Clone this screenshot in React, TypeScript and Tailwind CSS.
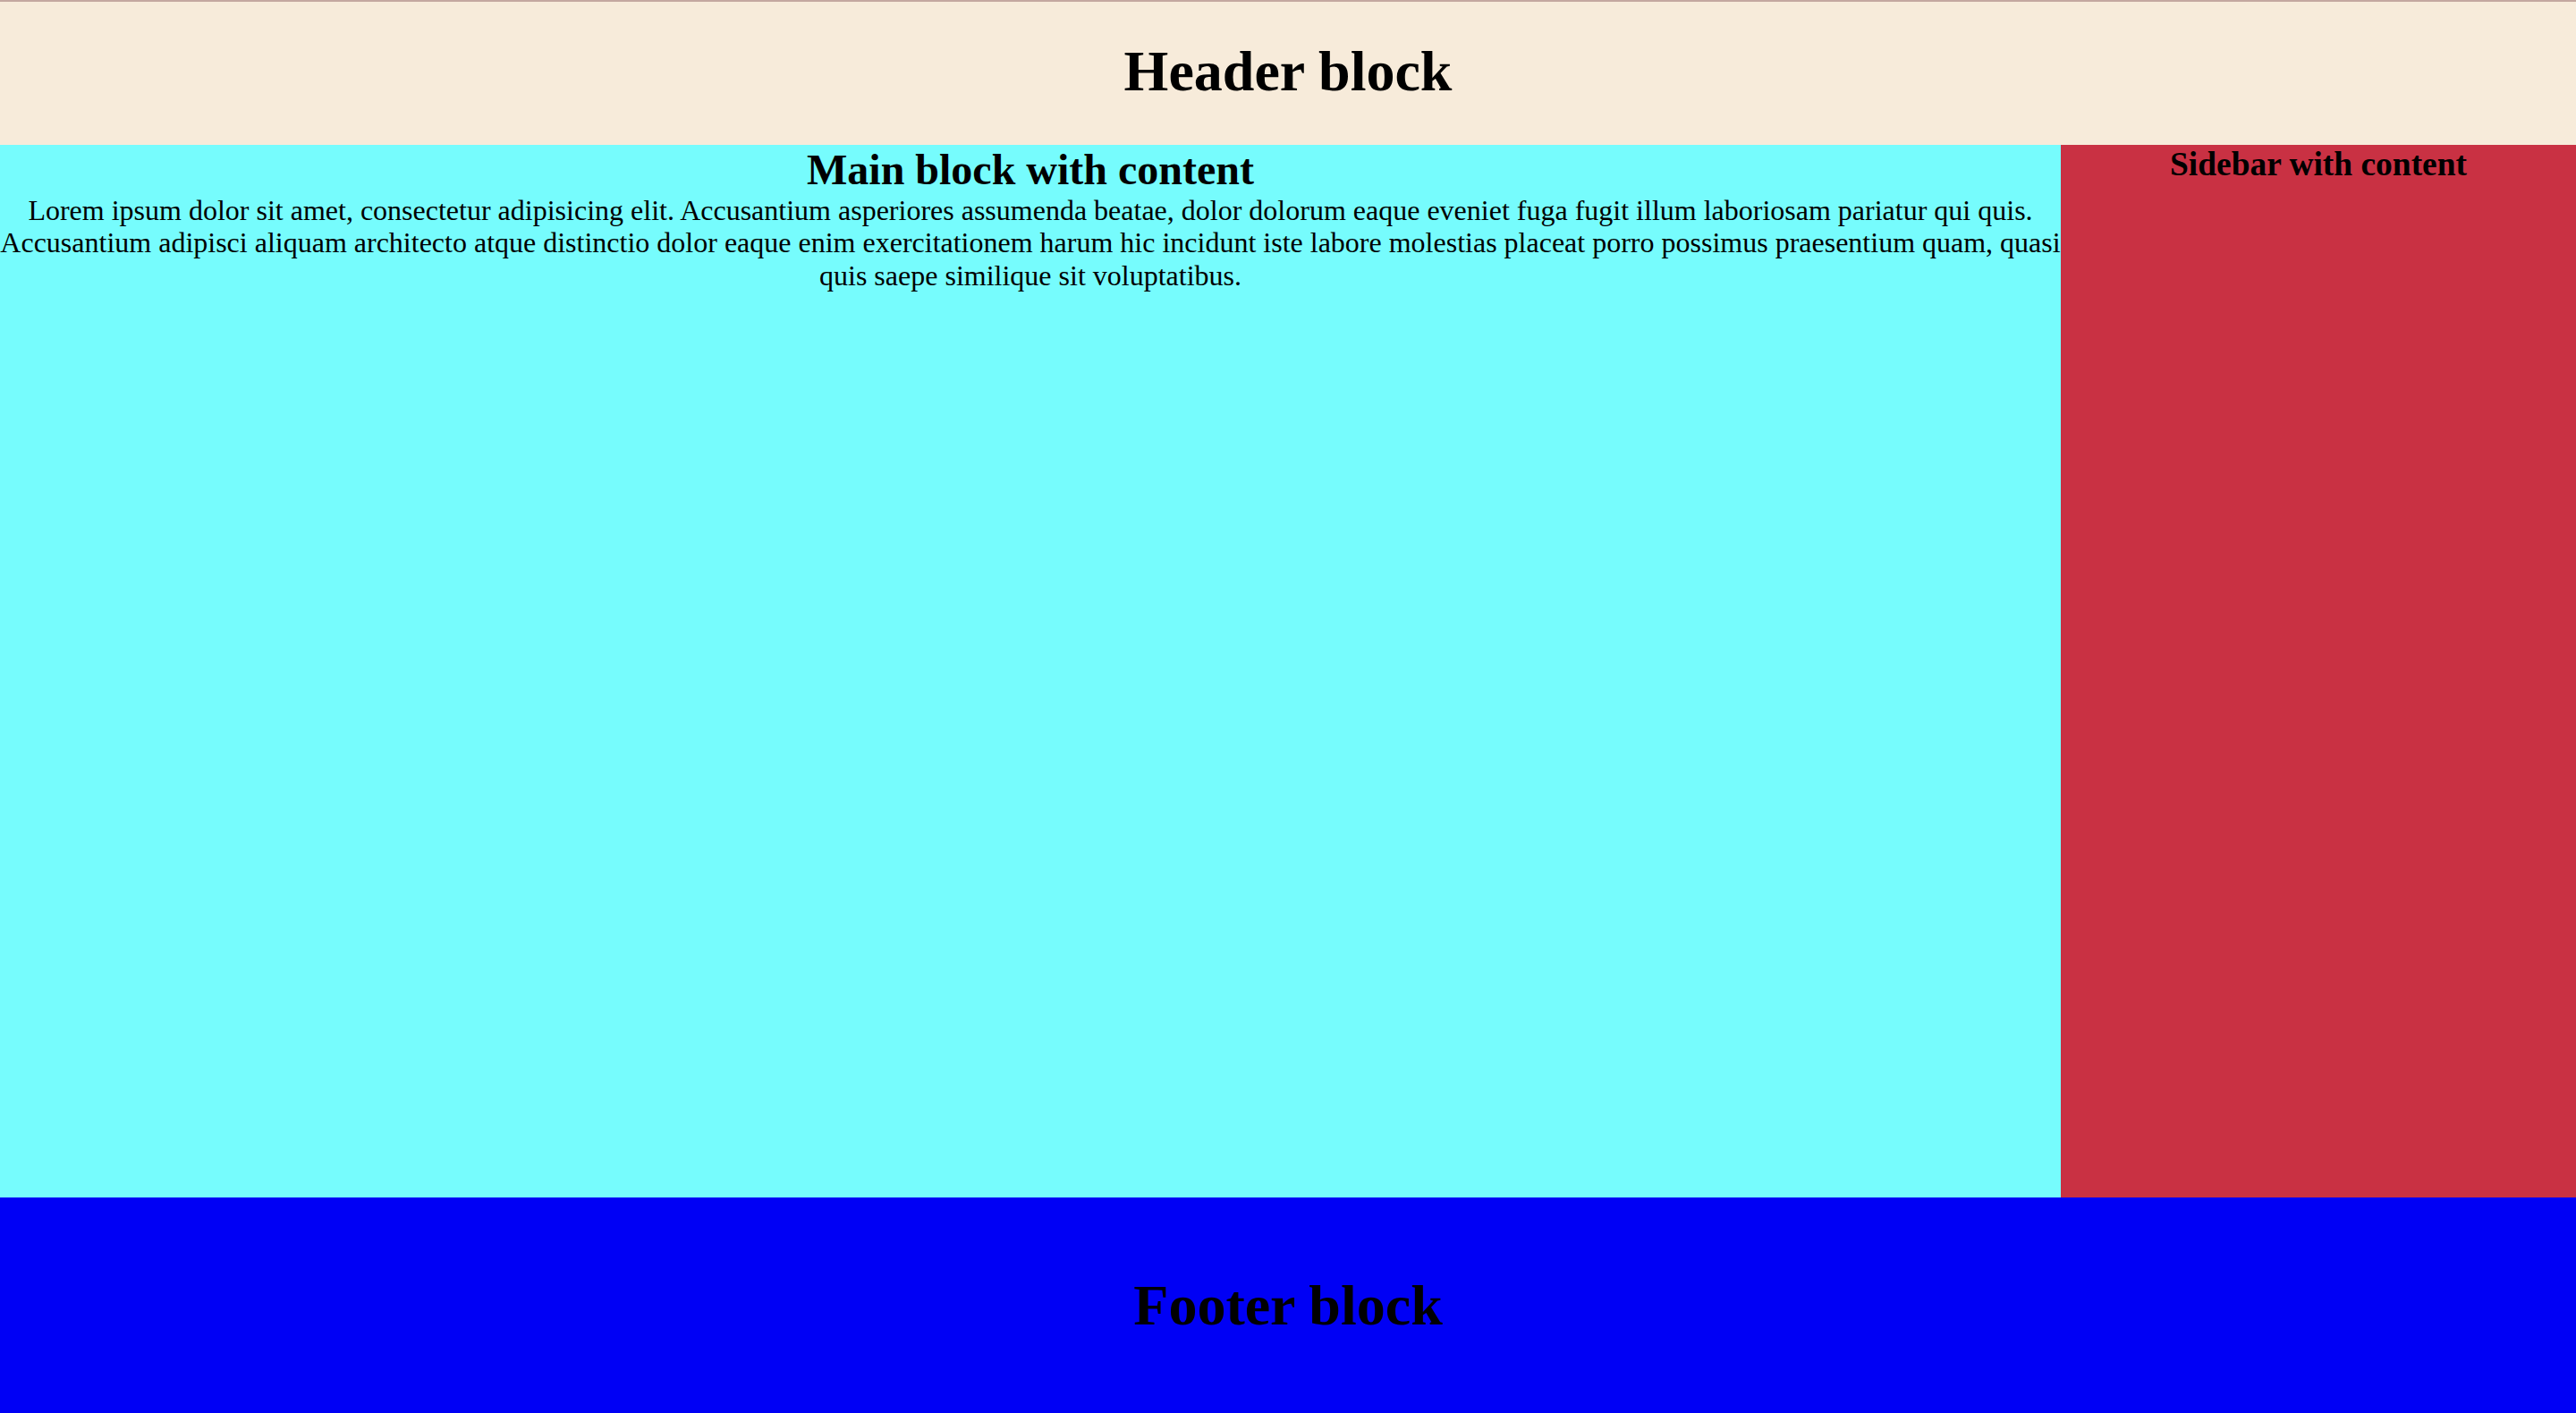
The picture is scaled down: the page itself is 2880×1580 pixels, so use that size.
const App = () => {
  return (
    <div className="h-screen flex flex-col font-['Liberation_Serif','Times_New_Roman',serif] text-black text-center">
      <header className="border-t-2 border-[#c4a8a0] bg-[#f7ebda]">
        <h1 className="mt-[41px] mb-[45px] text-[64px] font-bold leading-[1.149]">Header block</h1>
      </header>

      <div className="flex flex-1 min-h-0">
        <main className="w-4/5 bg-[#76fcfd]">
          <h2 className="text-[48px] font-bold leading-[1.149]">Main block with content</h2>
          <p className="text-[32px] leading-[1.149]">
            Lorem ipsum dolor sit amet, consectetur adipisicing elit. Accusantium asperiores assumenda
            beatae, dolor dolorum eaque eveniet fuga fugit illum laboriosam pariatur qui quis.
            Accusantium adipisci aliquam architecto atque distinctio dolor eaque enim exercitationem
            harum hic incidunt iste labore molestias placeat porro possimus praesentium quam, quasi
            quis saepe similique sit voluptatibus.
          </p>
        </main>
        <aside className="w-1/5 bg-[#c93143]">
          <h3 className="text-[37.44px] font-bold leading-[1.149]">Sidebar with content</h3>
        </aside>
      </div>

      <footer className="h-[241px] flex items-center justify-center bg-[#0000f5]">
        <h1 className="text-[64px] font-bold leading-[1.149]">Footer block</h1>
      </footer>
    </div>
  );
};

export default App;
